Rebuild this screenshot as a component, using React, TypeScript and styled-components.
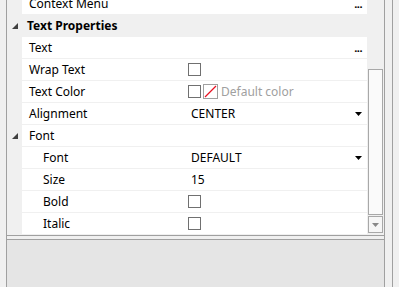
import React from "react"
import styled, { createGlobalStyle } from "styled-components"

const GlobalStyle = createGlobalStyle`
  html, body {
    margin: 0;
    padding: 0;
  }
  body {
    font-family: "Noto Sans", "Open Sans", sans-serif;
    font-size: 12px;
    color: #000;
    background: #f0f0f0;
  }
`

const Page = styled.div`
  display: flex;
  width: 399px;
  height: 287px;
  overflow: hidden;
  background: #f0f0f0;
`

const Edge = styled.div<{ $w: number }>`
  width: ${(p) => p.$w}px;
  flex: none;
  background: #f0f0f0;
`

const Line = styled.div`
  width: 1px;
  flex: none;
  background: #a0a0a0;
`

const Main = styled.div`
  flex: 1;
  display: flex;
  flex-direction: column;
  min-width: 0;
`

const GridArea = styled.div`
  height: 236px;
  flex: none;
  display: flex;
  background: #f0f0f0;
  border-bottom: 1px solid #a0a0a0;
  box-sizing: border-box;
`

const Rows = styled.div`
  flex: 1;
  overflow: hidden;
`

const RowList = styled.div`
  margin-top: -7px;
`

const Row = styled.div<{ $category?: boolean }>`
  display: grid;
  grid-template-columns: 15px 165px 1fr;
  height: 22px;
  box-sizing: border-box;
  border-bottom: 1px solid #f0f0f0;
  background: ${(p) => (p.$category ? "#f0f0f0" : "#fff")};
  line-height: 21px;
`

const Gutter = styled.div`
  background: #f0f0f0;
  display: flex;
  align-items: center;
  justify-content: center;
`

const Name = styled.div<{ $indent?: number; $bold?: boolean }>`
  padding-left: ${(p) => p.$indent ?? 7}px;
  font-weight: ${(p) => (p.$bold ? 700 : 400)};
  white-space: nowrap;
  overflow: hidden;
`

const CategoryName = styled(Name)`
  grid-column: 2 / 4;
`

const Value = styled.div`
  display: flex;
  align-items: center;
  padding-left: 1px;
  padding-right: 5px;
  white-space: nowrap;
  overflow: hidden;
`

const ValueText = styled.span<{ $muted?: boolean }>`
  margin-left: 3px;
  color: ${(p) => (p.$muted ? "#a0a0a0" : "#000")};
`

const Spacer = styled.span`
  flex: 1;
`

const Dots = styled.span`
  font-weight: 700;
  font-size: 11px;
  letter-spacing: -0.5px;
`

const Checkbox = styled.span`
  width: 13px;
  height: 13px;
  box-sizing: border-box;
  border: 1px solid #707070;
  background: #fff;
  flex: none;
`

const Swatch = styled.span`
  width: 15px;
  height: 15px;
  box-sizing: border-box;
  border: 1px solid #a0a0a0;
  margin-left: 2px;
  flex: none;
  display: flex;
`

const ScrollBar = styled.div`
  width: 17px;
  flex: none;
  display: flex;
  flex-direction: column;
  background: #f0f0f0;
  padding: 0 1px 2px;
  box-sizing: border-box;
`

const Track = styled.div<{ $h: number }>`
  height: ${(p) => p.$h}px;
  flex: none;
`

const Thumb = styled.div`
  flex: 1;
  border: 1px solid #a8a8a8;
  background: #fafafa;
`

const ArrowButton = styled.div`
  height: 15px;
  margin-top: 1px;
  flex: none;
  border: 1px solid #a8a8a8;
  background: #f6f6f6;
  display: flex;
  align-items: center;
  justify-content: center;
`

const Splitter = styled.div`
  height: 4px;
  flex: none;
  background: #f0f0f0;
  border-bottom: 1px solid #a0a0a0;
  box-sizing: border-box;
`

const Description = styled.div`
  flex: 1;
  background: #e5e5e5;
`

const Expander = () => (
  <svg width="6" height="6" viewBox="0 0 6 6">
    <polygon points="6,0 6,6 0,6" fill="#404040" />
  </svg>
)

const DropArrow = () => (
  <svg width="7" height="4" viewBox="0 0 7 4">
    <polygon points="0,0 7,0 3.5,4" fill="#000" />
  </svg>
)

const NoColor = () => (
  <svg width="13" height="13" viewBox="0 0 13 13">
    <line x1="1" y1="12" x2="12" y2="1" stroke="#e81123" strokeWidth="1.2" />
  </svg>
)

type Prop = {
  name: string
  indent?: number
  value?: React.ReactNode
}

const PropRow = ({ name, indent, value }: Prop) => (
  <Row>
    <Gutter />
    <Name $indent={indent}>{name}</Name>
    <Value>{value}</Value>
  </Row>
)

const Ellipsis = () => (
  <>
    <Spacer />
    <Dots>...</Dots>
  </>
)

const App = (): JSX.Element => {
  return (
    <>
      <GlobalStyle />
      <Page>
        <Edge $w={6} />
        <Line />
        <Main>
          <GridArea>
            <Rows>
              <RowList>
                <PropRow name="Context Menu" value={<Ellipsis />} />
                <Row $category>
                  <Gutter>
                    <Expander />
                  </Gutter>
                  <CategoryName $indent={5} $bold>
                    Text Properties
                  </CategoryName>
                </Row>
                <PropRow name="Text" value={<Ellipsis />} />
                <PropRow name="Wrap Text" value={<Checkbox />} />
                <PropRow
                  name="Text Color"
                  value={
                    <>
                      <Checkbox />
                      <Swatch>
                        <NoColor />
                      </Swatch>
                      <ValueText $muted>Default color</ValueText>
                    </>
                  }
                />
                <PropRow
                  name="Alignment"
                  value={
                    <>
                      <ValueText>CENTER</ValueText>
                      <Spacer />
                      <DropArrow />
                    </>
                  }
                />
                <Row>
                  <Gutter>
                    <Expander />
                  </Gutter>
                  <Name>Font</Name>
                  <Value />
                </Row>
                <PropRow
                  name="Font"
                  indent={21}
                  value={
                    <>
                      <ValueText>DEFAULT</ValueText>
                      <Spacer />
                      <DropArrow />
                    </>
                  }
                />
                <PropRow name="Size" indent={21} value={<ValueText>15</ValueText>} />
                <PropRow name="Bold" indent={21} value={<Checkbox />} />
                <PropRow name="Italic" indent={21} value={<Checkbox />} />
              </RowList>
            </Rows>
            <ScrollBar>
              <Track $h={69} />
              <Thumb />
              <ArrowButton>
                <svg width="7" height="4" viewBox="0 0 7 4">
                  <polygon points="0,0 7,0 3.5,4" fill="#888" />
                </svg>
              </ArrowButton>
            </ScrollBar>
          </GridArea>
          <Splitter />
          <Description />
        </Main>
        <Line />
        <Edge $w={7} />
        <Line />
        <Edge $w={6} />
      </Page>
    </>
  )
}

export default App
